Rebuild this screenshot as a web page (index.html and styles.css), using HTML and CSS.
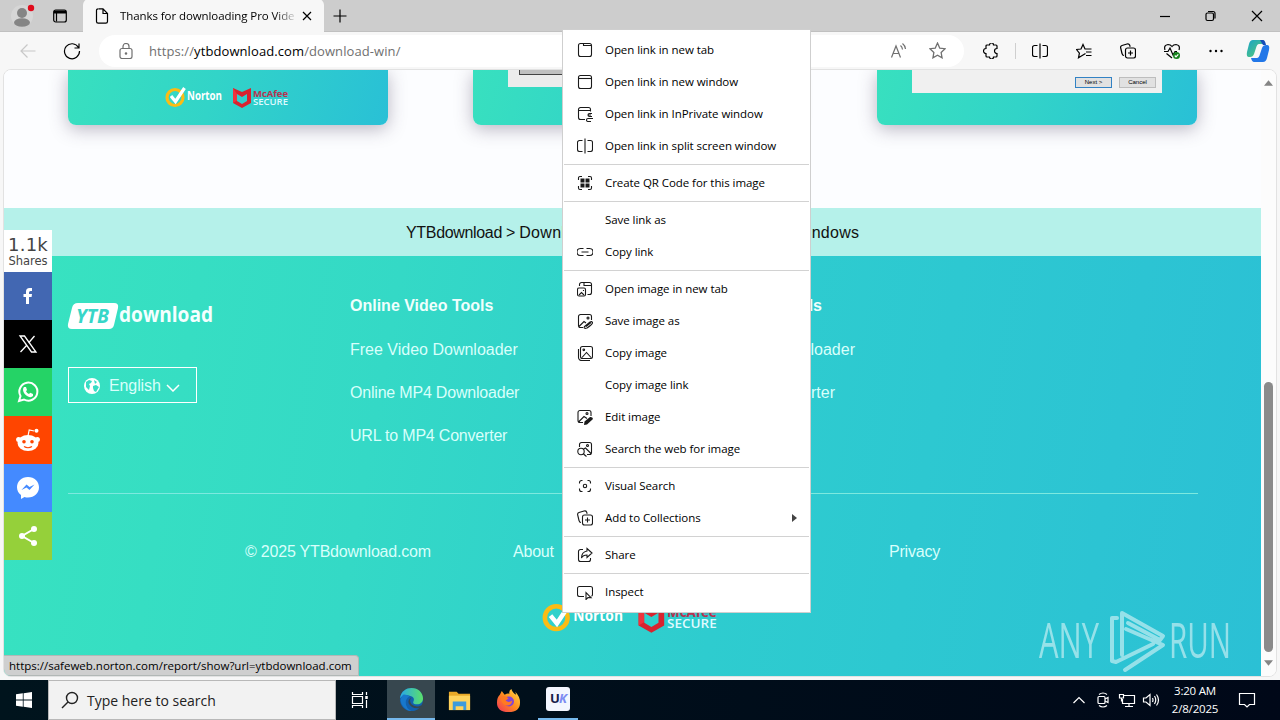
FILE: index.html
```html
<!DOCTYPE html>
<html lang="en">
  <head>
    <meta charset="UTF-8">
    <meta name="viewport" content="width=device-width, initial-scale=1.0">
    <title>Thanks for downloading</title>
    <link rel="stylesheet" href="styles.css">
  </head>

  <body>
    <svg class="defs" width="0" height="0">
      <defs>
        <linearGradient id="copilot-a" x1="0" y1="0" x2="1" y2="1"><stop offset="0" stop-color="#19a3c8"/><stop offset="1" stop-color="#5fcf6c"/></linearGradient>
        <linearGradient id="edge-a" x1="0" y1="0" x2="1" y2="0"><stop offset="0" stop-color="#28a8e8"/><stop offset="1" stop-color="#5be06a"/></linearGradient>
        <linearGradient id="fox-a" x1="1" y1="0" x2="0" y2="1"><stop offset="0" stop-color="#ffe14a"/><stop offset="0.5" stop-color="#ff8a1e"/><stop offset="1" stop-color="#f0305c"/></linearGradient>
        <symbol id="window" viewBox="0 0 16 16"><rect x="1.500" y="1.500" width="13" height="13" rx="2"/><path d="M1.500 4.500h13"/></symbol>
        <symbol id="tab" viewBox="0 0 16 16"><rect x="1.500" y="1.500" width="13" height="13" rx="2"/><path d="M6.500 1.500v2h8"/></symbol>
        <symbol id="private" viewBox="0 0 16 16"><path d="M8 13.500H3.500a2 2 0 0 1-2-2v-8a2 2 0 0 1 2-2h8a2 2 0 0 1 2 2v2M1.500 4.500h12M15 7.500h-2.500a1.500 1.500 0 0 0 0 3H15M16 12.500h-5a1.500 1.500 0 0 0 0 3h3M11 9h3"/></symbol>
        <symbol id="split" viewBox="0 0 16 16"><path d="M8 .5v15M5.500 2.500h-3a2 2 0 0 0-2 2v7a2 2 0 0 0 2 2h3M10.500 2.500h3a2 2 0 0 1 2 2v7a2 2 0 0 1-2 2h-3"/></symbol>
        <symbol id="qr" viewBox="0 0 16 16"><path d="M1.500 5V3a1.500 1.500 0 0 1 1.500-1.500h2M11 1.500h2A1.500 1.500 0 0 1 14.500 3v2M14.500 11v2a1.500 1.500 0 0 1-1.500 1.500h-2M5 14.500H3A1.500 1.500 0 0 1 1.500 13v-2"/><path class="solid" d="M3.500 3.500h4v4h-4zM8.500 3.500h4v4h-4zM3.500 8.500h4v4h-4zM8.500 8.500h4v4h-4z"/></symbol>
        <symbol id="link" viewBox="0 0 16 16"><path d="M6.500 4.500h-3a3.500 3.500 0 0 0 0 7h3M9.500 4.500h3a3.500 3.500 0 0 1 0 7h-3M4.500 8h7"/></symbol>
        <symbol id="image-tab" viewBox="0 0 16 16"><path d="M2.500 5V3.500a2 2 0 0 1 2-2h8a2 2 0 0 1 2 2v8a2 2 0 0 1-2 2h-2M7 1.500v3h7.500"/><rect x=".5" y="7" width="8" height="8" rx="1.500"/><path d="M2 14l2.500-2.500L7 14M6.500 9v1"/></symbol>
        <symbol id="image-save" viewBox="0 0 16 16"><path d="M6 14.500H3.500a2 2 0 0 1-2-2v-9a2 2 0 0 1 2-2h9a2 2 0 0 1 2 2V7M2 13.500l5-5 2 1.500M7 14l6-5q2-1 2.500.5T10 15q-3 1-3-1M9 13.500l5-4"/><circle cx="11" cy="5" r="1"/></symbol>
        <symbol id="images" viewBox="0 0 16 16"><rect x="3.500" y="1.500" width="12" height="12" rx="2"/><path d="M1.500 4v8.500a3 3 0 0 0 3 3H13M5 12.500l4.500-5 4.500 5"/><circle cx="6.800" cy="4.800" r=".8"/></symbol>
        <symbol id="image-edit" viewBox="0 0 16 16"><path d="M6 13.500H3a2 2 0 0 1-2-2v-8a2 2 0 0 1 2-2h9a2 2 0 0 1 2 2V7M2 12.500l5-5 3 2"/><circle cx="10" cy="4.500" r="1"/><path class="solid" d="M7.500 12.500l5.500-4.500q2.500-.5 3 2l-6 5.500-3 .5z"/></symbol>
        <symbol id="image-search" viewBox="0 0 16 16"><path d="M2.500 6V3.500a2 2 0 0 1 2-2h8a2 2 0 0 1 2 2v8a2 2 0 0 1-2 2H10M6.500 8l2-1 6 6M6.500 13l3 2.500"/><circle cx="4" cy="10.500" r="3.200"/><circle cx="10.500" cy="4.500" r="1"/></symbol>
        <symbol id="visual" viewBox="0 0 16 16"><path d="M2.500 5.500v-1a2 2 0 0 1 2-2h1M10.500 2.500h1a2 2 0 0 1 2 2v1M13.500 10.500v1a2 2 0 0 1-2 2h-1M5.500 13.500h-1a2 2 0 0 1-2-2v-1"/><circle cx="8" cy="8" r="1.700"/></symbol>
        <symbol id="collections" viewBox="0 0 16 16"><path d="M4 12.500q-1.500 0-2-2L.7 5q-.5-2 1.300-2.500l5-1.500q2-.5 2.600 1l.6 1.700"/><rect x="5.500" y="5" width="10" height="10" rx="2"/><path d="M10.500 7.500v5M8 10h5"/></symbol>
        <symbol id="share" viewBox="0 0 16 16"><path d="M6 2.500H3.500a2 2 0 0 0-2 2v8a2 2 0 0 0 2 2h8a2 2 0 0 0 2-2V11M10 1.500l5 4.500-5 4.500V8q-4 0-5.500 3Q4.500 5 10 4z"/></symbol>
        <symbol id="inspect" viewBox="0 0 16 16"><path d="M7 12.500H2.500a2 2 0 0 1-2-2v-6a2 2 0 0 1 2-2h11a2 2 0 0 1 2 2v6a2 2 0 0 1-1 1.700M9 8.500v7l2-2 3 .2z"/></symbol>
        <symbol id="star" viewBox="0 0 16 16"><path d="M8 1l2.100 4.700 5 .6-3.700 3.500.9 5.100L8 12.400l-4.300 2.500.9-5.100L.9 6.300l5-.6z"/></symbol>
        <symbol id="badges" viewBox="0 0 126 28">
          <circle cx="10" cy="14.500" r="8" fill="none" stroke="#fbbc14" stroke-width="3.200"/>
          <path d="M6 13l4.500 5.500L19.500 5" fill="none" stroke="#fff" stroke-width="3.200"/>
          <text class="norton" x="22" y="17" textLength="35" lengthAdjust="spacingAndGlyphs">Norton</text>
          <path d="M68 5l9 4 9-4v15l-9 5-9-5z" fill="#d8232f"/>
          <path d="M68 5v15l4-2.500V11z" fill="#f0333d"/>
          <path d="M72 11l5 3 5-3v7l-5 3-5-3z" fill="#30cfce"/>
          <text class="mcafee" x="88" y="14" textLength="35" lengthAdjust="spacingAndGlyphs">McAfee</text>
          <text class="secure" x="88" y="22" textLength="35" lengthAdjust="spacingAndGlyphs">SECURE</text>
        </symbol>
      </defs>
    </svg>

    <div class="titlebar">
      <svg class="profile" viewBox="0 0 44 32"><circle cx="22" cy="16" r="11" fill="#d6d6d6"/><circle cx="22" cy="13" r="5" fill="#858585"/><ellipse cx="22" cy="22.500" rx="8" ry="4.300" fill="#858585"/><circle cx="31" cy="8" r="3.200" fill="#e00b1c"/></svg>
      <svg class="tab-actions line" viewBox="0 0 16 16"><rect x="1.700" y="2" width="12.600" height="12" rx="2"/><path d="M2 4h12" stroke-width="3"/><path d="M4.500 4v9.500"/></svg>
      <div class="tab">
        <svg class="icon line" viewBox="0 0 16 16"><path d="M4.500.8H9l4.500 4.700v8a1.700 1.700 0 0 1-1.700 1.700H4.200a1.700 1.700 0 0 1-1.700-1.700v-11A1.700 1.700 0 0 1 4.200.8M9 1v4.500h4.500"/></svg>
        <span class="tab-title">Thanks for downloading Pro Vide</span>
        <svg class="tab-close line" viewBox="0 0 10 10"><path d="M1 1l8 8M9 1L1 9"/></svg>
      </div>
      <svg class="new-tab line" viewBox="0 0 16 16"><path d="M8 1.500v13M1.500 8h13"/></svg>
      <div class="window-buttons">
        <svg class="line" viewBox="0 0 46 32"><path d="M18 16.500h10"/></svg>
        <svg class="line" viewBox="0 0 46 32"><rect x="18" y="13" width="7.500" height="7.500" rx="1.500"/><path d="M20 11.500h5a2 2 0 0 1 2 2v5"/></svg>
        <svg class="line" viewBox="0 0 46 32"><path d="M18 11l10 10M28 11L18 21"/></svg>
      </div>
    </div>

    <div class="toolbar">
      <svg class="back line" viewBox="0 0 16 16"><path d="M15.500 8H1M7.500 1.500L1 8l6.500 6.500"/></svg>
      <svg class="refresh line" viewBox="0 0 18 18"><path d="M15.500 5.500A7.500 7.500 0 1 0 16.500 9M16 1.500v4.500h-4.500"/></svg>
      <div class="address">
        <svg class="lock line" viewBox="0 0 16 16"><rect x="2" y="5.500" width="12" height="10" rx="2"/><path d="M5 5.500V3.500a3 3 0 0 1 6 0v2"/><circle cx="8" cy="10.500" r=".7"/></svg>
        <span class="url">https://<b>ytbdownload.com</b>/download-win/</span>
        <svg class="read line" viewBox="0 0 16 16"><path d="M1 14.500L5.500 3 10 14.500M2.500 10.500h6M10 2.500a6 6 0 0 1 2 4M12 .5a8 8 0 0 1 3 5.500"/></svg>
        <svg class="favorite line"><use href="#star"/></svg>
      </div>
      <div class="tools">
        <svg class="line" viewBox="0 0 16 16"><path d="M4 2h2.500a2 2 0 0 1 4 0H13a1 1 0 0 1 1 1v2.500a2.500 2.500 0 0 0 0 5V13a1 1 0 0 1-1 1h-2.500a2 2 0 0 1-4 0H4a1 1 0 0 1-1-1v-2.500a2.300 2.300 0 0 1 0-5V3a1 1 0 0 1 1-1z"/></svg>
        <i class="divider"></i>
        <svg class="line"><use href="#split"/></svg>
        <svg class="line" viewBox="0 0 16 16"><path d="M9.500 10.500l-3.700 2.300-3.300 2 .9-4.600L.5 6.500 5 6l2-4.500L9 6h6.500M10 9h5.500M10 12.500h5.500"/></svg>
        <svg class="line"><use href="#collections"/></svg>
        <svg class="line" viewBox="0 0 16 16"><path d="M1 7Q-.5 2 4 1.500q2.500 0 4 2 1.500-2 4-2Q16.500 2 15 7M0 8.500h4L6 5l3 7 2-3.500h2M2.500 10.500L8 15"/><circle cx="12.500" cy="12.500" r="3.500" fill="#15821c" stroke="none"/><path d="M10.800 12.500l1.200 1.300 2.300-2.500" stroke="#fff"/></svg>
        <svg viewBox="0 0 16 16"><circle cx="2.500" cy="8" r="1.200"/><circle cx="8" cy="8" r="1.200"/><circle cx="13.500" cy="8" r="1.200"/></svg>
        <svg class="copilot" viewBox="0 0 24 24"><path d="M7 1h9q2 0 3 4H13q-2 0-3 4l-2 6q-1 3-4 3H3q-3 0-2-5L3 5q1-4 4-4z" fill="url(#copilot-a)"/><path d="M17 23H8q-2 0-3-4h6q2 0 3-4l2-6q1-3 4-3h1q3 0 2 5l-2 8q-1 4-4 4z" fill="#2277e8"/><path d="M14 1h3q2 0 3 5h-3z" fill="#154db8"/></svg>
      </div>
    </div>

    <div class="viewport">
      <div class="page">
        <div class="cards">
          <div class="card"><svg class="badges-small"><use href="#badges"/></svg></div>
          <div class="card"><div class="installer"><div class="installer-bar"></div></div></div>
          <div class="card"><div class="dialog"><span class="dialog-btn primary">Next &gt;</span><span class="dialog-btn">Cancel</span></div></div>
        </div>
        <div class="breadcrumb"><span class="home">YTBdownload &gt; </span>Download Pro Video Downloader for Windows</div>
        <div class="footer">
          <div class="footer-top">
            <div class="brand">
              <svg class="logo" viewBox="0 0 146 28"><path d="M10 1h36q5 0 4 5l-4 17q-1 4-5 4H4q-5 0-4-5L4 6q1-5 6-5z" fill="#fff"/><text class="logo-ytb" x="8" y="21" textLength="33" lengthAdjust="spacingAndGlyphs">YTB</text><text class="logo-name" x="51" y="20" textLength="94" lengthAdjust="spacingAndGlyphs">download</text></svg>
              <div class="language">
                <svg class="globe" viewBox="0 0 16 16"><circle cx="8" cy="8" r="8" fill="#fff"/><path d="M2 4l3-2 3 1-1 2-2 1 1 2-1 4-3-3zM10 2l3 2-2 2zM9 8l3-1 3 2-3 5-2-1-1-3z" fill="#37dcc4"/></svg>
                <span>English</span>
                <svg class="chevron line" viewBox="0 0 14 8"><path d="M1 1l6 6 6-6"/></svg>
              </div>
            </div>
            <div class="links">
              <h4>Online Video Tools</h4>
              <a>Free Video Downloader</a>
              <a class="tight">Online MP4 Downloader</a>
              <a class="tight">URL to MP4 Converter</a>
            </div>
            <div class="links links-desktop">
              <h4>Desktop Tools</h4>
              <a class="wide">Video Downloader</a>
              <a class="mid">Video Converter</a>
            </div>
          </div>
          <div class="legal">
            <span class="copyright tight">© 2025 YTBdownload.com</span>
            <span class="about tight">About</span>
            <span class="tight">Privacy</span>
          </div>
          <svg class="badges-large"><use href="#badges"/></svg>
        </div>
      </div>
      <div class="scrollbar">
        <svg viewBox="0 0 10 6"><path d="M5 0l5 6H0z"/></svg>
        <div class="thumb"></div>
        <svg viewBox="0 0 10 6"><path d="M0 0h10L5 6z"/></svg>
      </div>

      <div class="shares">
        <div class="share-count"><b>1.1k</b><span>Shares</span></div>
        <div class="share facebook"><svg viewBox="0 0 24 24"><path d="M10 20v-7H7.500v-3H10V7.500Q10 4 13.500 4H16v3h-1.500Q13 7 13 8.500V10h3l-.4 3H13v7z"/></svg></div>
        <div class="share x"><svg viewBox="0 0 24 24"><path d="M4 4h4.500l11.500 16h-4.500zM18.500 4l-6 7M11 13l-6.500 7" fill="none" stroke="#fff" stroke-width="1.300"/></svg></div>
        <div class="share whatsapp"><svg viewBox="0 0 24 24"><path d="M3 21l1.500-5a9 9 0 1 1 3.500 3.500z" fill="none" stroke="#fff" stroke-width="2"/><path d="M8 7h2l1 3-1 1.200q1 2 3 2.800l1.200-1.300L17 14v2q-2 2-5 .5Q7.500 14 7 10 7 8 8 7z"/></svg></div>
        <div class="share reddit"><svg viewBox="0 0 24 24"><path d="M12 8l1.200-6 5 1" fill="none" stroke="#fff" stroke-width="1.200"/><circle cx="20.500" cy="2.800" r="2"/><circle cx="2.600" cy="11.500" r="2.500"/><circle cx="21.400" cy="11.500" r="2.500"/><ellipse cx="12" cy="15" rx="10.500" ry="8"/><circle cx="8" cy="13.800" r="1.800" fill="#ff4500"/><circle cx="16" cy="13.800" r="1.800" fill="#ff4500"/><path d="M8 18.500q4 2.500 8 0" fill="none" stroke="#ff4500" stroke-width="1.200"/></svg></div>
        <div class="share messenger"><svg viewBox="0 0 24 24"><path d="M12 1C5.500 1 1 5.500 1 11.300c0 3.200 1.500 6 4 7.700v4l3.500-2q1.500.5 3.500.5c6.500 0 11-4.300 11-10.200S18.500 1 12 1z"/><path d="M5.500 14l5-5.500 3 2.500 5-2.500-5 5.500-3-2.500z" fill="#448aff"/></svg></div>
        <div class="share any"><svg viewBox="0 0 24 24"><path d="M18 5L6 12l12 7" fill="none" stroke="#fff" stroke-width="2"/><circle cx="6" cy="12" r="3"/><circle cx="18" cy="5" r="3"/><circle cx="18" cy="19" r="3"/></svg></div>
      </div>

      <svg class="watermark" viewBox="0 0 196 64">
        <g fill="#fff">
          <text x="1" y="49" textLength="60" lengthAdjust="spacingAndGlyphs">ANY</text>
          <text x="131" y="49" textLength="62" lengthAdjust="spacingAndGlyphs">RUN</text>
        </g>
        <path d="M79 9h-5v43l4 1 37-18M84 46V4l41 23-3 4-32-17M88 20l37 16-38 25 M88 20" fill="none" stroke="#fff" stroke-width="4" stroke-linejoin="round" stroke-linecap="round"/>
      </svg>
      <div class="status">https://safeweb.norton.com/report/show?url=ytbdownload.com</div>
    </div>

    <div class="taskbar">
      <div class="start"><svg viewBox="0 0 16 16"><path d="M0 2.300l6.800-1v6.200H0zM7.600 1.200L16 0v7.500H7.600zM0 8.400h6.800v6.300l-6.800-1zM7.600 8.400H16V16l-8.400-1.200z"/></svg></div>
      <div class="search"><svg class="line" viewBox="0 0 18 18"><circle cx="11" cy="7" r="5.500"/><path d="M7 11l-6 6"/></svg><span>Type here to search</span></div>
      <div class="task view"><svg class="line" viewBox="0 0 18 18"><path d="M1.500 1v2.500h10V1M1.500 17v-2.500h10V17M1.500 5.500h10v7h-10zM15.500 1v3M15.500 9v8"/><path d="M15.500 5v3" stroke-width="2.500"/></svg></div>
      <div class="task active"><svg viewBox="0 0 26 26"><circle cx="13" cy="13" r="12" fill="#1260ae"/><path d="M1 12C2 4 8 1 13 1c7 0 12 5 12 11 0 4-3 6-6 6s-5-1-4-3 1-5-4-6-8 0-10 3z" fill="url(#edge-a)"/><path d="M13 11q-3 3 0 7 3 3 8 2 2-1 3-1-1 2-3 3-8 1-11-5-1-4 3-6z" fill="#37474f"/><path d="M4 8q-5 7 1 13 4 4 8 4-6-3-6-9 0-4 4-6-4-3-7-2z" fill="#1878cc"/></svg></div>
      <div class="task"><svg viewBox="0 0 26 26"><path d="M2 4h8l2 2h12v17H2z" fill="#e9a928"/><path d="M2 8h22v15H2z" fill="#ffd35c"/><path d="M6 14h14v9h-3v-4H9v4H6z" fill="#3d9bdc"/></svg></div>
      <div class="task"><svg viewBox="0 0 26 26"><path d="M4 7l2-4 3 4q3-2 5-1-1-3 2-5 1 4 5 6l-1-3q5 5 5 11 0 10-12 10T1 15q0-5 3-8z" fill="url(#fox-a)"/><circle cx="13.500" cy="14" r="5.200" fill="#8144d8"/><path d="M5 9q5-2 8 2l-3 2q3 3 7 0-1 6-7 5-5-2-5-9z" fill="#ff7a22"/></svg></div>
      <div class="task uk"><span class="uk-tile">U<em>K</em></span></div>
      <div class="tray">
        <svg class="line" viewBox="0 0 18 18"><path d="M3.500 12L9 6.500l5.500 5.500"/></svg>
        <svg class="line" viewBox="0 0 18 18"><rect x="4" y="5.500" width="7" height="7" rx="1"/><path d="M11 8l3-1.500v5L11 10M5 3.500q4-3 8 0M5 14.500q4 3 8 0"/></svg>
        <svg class="line" viewBox="0 0 18 18"><path d="M5.500 4.500h11v8H4.500V8M11 12.500v3M7 15.500h8M1.500 3.500h4v3.500h-4zM3.500 7v3.500"/></svg>
        <svg class="line" viewBox="0 0 18 18"><path d="M1.500 7H4l4-3.500v11L4 11H1.500zM10.500 7q1 2 0 4M12.500 5q2.500 4 0 8M14.500 3.500q4 5.500 0 11"/></svg>
      </div>
      <div class="clock"><span>3:20 AM</span><span>2/8/2025</span></div>
      <svg class="notify line" viewBox="0 0 18 18"><path d="M1.500 2.500h15v11h-5L9 16l-2.500-2.500h-5z"/></svg>
    </div>

    <div class="menu">
      <div class="item"><svg><use href="#tab"/></svg>Open link in new tab</div>
      <div class="item"><svg><use href="#window"/></svg>Open link in new window</div>
      <div class="item"><svg><use href="#private"/></svg>Open link in InPrivate window</div>
      <div class="item"><svg><use href="#split"/></svg>Open link in split screen window</div>
      <hr>
      <div class="item"><svg><use href="#qr"/></svg>Create QR Code for this image</div>
      <hr>
      <div class="item"><svg></svg>Save link as</div>
      <div class="item"><svg><use href="#link"/></svg>Copy link</div>
      <hr>
      <div class="item"><svg><use href="#image-tab"/></svg>Open image in new tab</div>
      <div class="item"><svg><use href="#image-save"/></svg>Save image as</div>
      <div class="item"><svg><use href="#images"/></svg>Copy image</div>
      <div class="item"><svg></svg>Copy image link</div>
      <div class="item"><svg><use href="#image-edit"/></svg>Edit image</div>
      <div class="item"><svg><use href="#image-search"/></svg>Search the web for image</div>
      <hr>
      <div class="item"><svg><use href="#visual"/></svg>Visual Search</div>
      <div class="item"><svg><use href="#collections"/></svg>Add to Collections<i class="submenu"></i></div>
      <hr>
      <div class="item"><svg><use href="#share"/></svg>Share</div>
      <hr>
      <div class="item"><svg><use href="#inspect"/></svg>Inspect</div>
    </div>
  </body>
</html>
```

FILE: styles.css
```css
* {
  box-sizing: border-box;
}

body {
  margin: 0;
  width: 1280px;
  height: 720px;
  overflow: hidden;
  position: relative;
  display: flex;
  flex-direction: column;
  background: #f7f7f7;
  font-family: "Open Sans", "Noto Sans", sans-serif;
  font-size: 12px;
  color: #000;
}

svg {
  display: block;
  flex: none;
}

.defs {
  position: absolute;
}

.line {
  fill: none;
  stroke: currentColor;
  stroke-width: 1.2;
}

/* browser frame */
.titlebar {
  height: 32px;
  flex: none;
  display: flex;
  align-items: center;
  background: #cdcdcd;
  border-bottom: 1px solid #c0c0c0;
}

.profile {
  width: 44px;
  height: 32px;
}

.tab-actions {
  width: 16px;
  height: 16px;
  margin: 0 15px 0 8px;
}

.tab {
  width: 241px;
  height: 33px;
  display: flex;
  align-items: center;
  padding: 0 11px;
  background: #f7f7f7;
  border-radius: 6px 6px 0 0;
}

.icon {
  width: 16px;
  height: 16px;
  margin-right: 10px;
}

.tab-title {
  width: 176px;
  flex: none;
  overflow: hidden;
  white-space: nowrap;
  font-size: 11.5px;
  letter-spacing: -0.08px;
  -webkit-mask-image: linear-gradient(to right, #000 155px, transparent 178px);
  mask-image: linear-gradient(to right, #000 155px, transparent 178px);
}

.tab-close {
  width: 10px;
  height: 10px;
  margin-left: 6px;
}

.new-tab {
  width: 16px;
  height: 16px;
  margin-left: 8px;
}

.window-buttons {
  display: flex;
  margin-left: auto;
}

.window-buttons svg {
  width: 46px;
  height: 32px;
}

.toolbar {
  height: 37px;
  flex: none;
  display: flex;
  align-items: center;
}

.back {
  width: 16px;
  height: 16px;
  margin-left: 20px;
  color: #c8c8c8;
}

.refresh {
  width: 18px;
  height: 18px;
  margin: 0 18px 0 27px;
}

.address {
  width: 865px;
  height: 32px;
  display: flex;
  align-items: center;
  padding: 0 18px 0 19px;
  border-radius: 16px;
  background: #fff;
  color: #707070;
}

.lock {
  width: 16px;
  height: 16px;
  margin-right: 15px;
}

.url {
  font-size: 13px;
  letter-spacing: 0.09px;
}

.url b {
  font-weight: normal;
  color: #000;
}

.read {
  width: 17px;
  height: 16px;
  margin-left: auto;
  margin-right: 22px;
}

.favorite {
  width: 17px;
  height: 17px;
}

.tools {
  display: flex;
  align-items: center;
  margin-left: 5px;
}

.tools svg {
  width: 16px;
  height: 16px;
  margin: 0 14px;
}

.tools .copilot {
  width: 24px;
  height: 24px;
  margin: 0 0 0 8px;
}

.divider {
  width: 1px;
  height: 16px;
  margin: 0 2px;
  background: #cfcfcf;
}

/* web page */
.viewport {
  position: relative;
  height: 608px;
  flex: none;
  margin: 0 3px;
  display: flex;
  border: 1px solid #e2e2e2;
  border-radius: 8px;
  overflow: hidden;
  background: #fff;
}

.page {
  width: 1257px;
  height: 606px;
  overflow: hidden;
  font-family: "Liberation Sans", Arial, sans-serif;
  font-size: 16px;
}

.cards {
  height: 138px;
  display: flex;
  gap: 84.5px;
  padding-left: 64px;
  background: #fcfdff;
}

.card {
  width: 320px;
  height: 55px;
  border-radius: 0 0 8px 8px;
  background: linear-gradient(105deg, #38e0bf, #32d4c8 45%, #29c0d6);
  box-shadow: 0 4px 18px rgba(60, 50, 80, 0.35);
}

.badges-small {
  width: 126px;
  height: 28px;
  margin: 13px 0 0 97px;
}

.norton, .mcafee, .secure {
  font-family: "Open Sans", sans-serif;
  font-weight: bold;
}

.norton {
  font-size: 11.5px;
  fill: #fff;
}

.mcafee {
  font-size: 9.5px;
  fill: #b9324f;
}

.secure {
  font-size: 9px;
  font-weight: 600;
  fill: #dffaff;
}

.installer {
  width: 250px;
  height: 17px;
  margin-left: 35px;
  padding-left: 11px;
  background: #ececec;
}

.installer-bar {
  width: 228px;
  height: 5px;
  background: #c0c0c0;
  border: 1px solid #444;
  border-top: none;
}

.dialog {
  width: 250px;
  height: 23px;
  margin-left: 35px;
  padding: 7px 6px 0 0;
  display: flex;
  justify-content: flex-end;
  gap: 7px;
  background: #f0f0f0;
}

.dialog-btn {
  width: 37px;
  height: 11px;
  border: 1px solid #bdbdbd;
  background: #e1e1e1;
  font-size: 6px;
  line-height: 9px;
  text-align: center;
}

.dialog-btn.primary {
  border-color: #3282c4;
}

.breadcrumb {
  height: 48px;
  line-height: 49px;
  padding-left: 402px;
  background: #b5f1ea;
  color: #111;
  white-space: nowrap;
  letter-spacing: 0.3px;
}

.home {
  letter-spacing: -0.33px;
}

.footer {
  height: 420px;
  padding: 0 64px;
  color: #d8fffb;
  background: linear-gradient(100deg, #38e3c0, #34d9c6 30%, #2ecccf 58%, #2bc0d5);
}

.footer-top {
  width: 1130px;
  height: 238px;
  display: flex;
  border-bottom: 1px solid #7de9df;
}

.brand {
  width: 282px;
  padding-top: 46px;
}

.logo {
  width: 146px;
  height: 28px;
  overflow: visible;
}

.logo-ytb {
  font: italic bold 20px "Open Sans", sans-serif;
  fill: #37d6c8;
}

.logo-name {
  font: bold 22px "Open Sans", sans-serif;
  fill: #f4ffff;
}

.language {
  width: 129px;
  height: 36px;
  margin-top: 37px;
  padding: 1px 0 0 15px;
  display: flex;
  align-items: center;
  border: 1px solid #fff;
  letter-spacing: -0.1px;
}

.globe {
  width: 16px;
  height: 16px;
  margin-right: 9px;
}

.chevron {
  width: 14px;
  height: 8px;
  margin: 4px 0 0 5px;
  stroke: #fff;
  stroke-width: 1.5;
}

.links {
  width: 282px;
  padding-top: 40px;
  display: flex;
  flex-direction: column;
}

.links h4 {
  margin: 0 0 25px;
  font-size: 16px;
  line-height: 19px;
  color: #f0fffd;
}

.links a {
  line-height: 19px;
  margin-bottom: 24px;
}

.tight {
  letter-spacing: -0.2px;
}

.links-desktop {
  text-align: right;
}

.links-desktop h4 {
  width: 190px;
}

.wide {
  width: 223px;
}

.mid {
  width: 203px;
}

.legal {
  display: flex;
  padding: 48px 0 0 177px;
  line-height: 20px;
}

.copyright {
  width: 268px;
}

.about {
  width: 376px;
}

.badges-large {
  width: 179px;
  height: 40px;
  margin: 35px 0 0 474px;
}

.scrollbar {
  width: 15px;
  display: flex;
  flex-direction: column;
  align-items: center;
  padding: 10px 0;
  background: #fcfcfc;
  fill: #858585;
}

.scrollbar svg {
  width: 9px;
  height: 6px;
}

.thumb {
  width: 9px;
  height: 271px;
  margin: 296px 0 8px;
  border-radius: 5px;
  background: #8b8b8b;
}

.shares {
  position: absolute;
  left: 0;
  top: 160px;
  width: 48px;
}

.share-count {
  height: 42px;
  padding-top: 4px;
  display: flex;
  flex-direction: column;
  align-items: center;
  background: #fff;
  color: #444;
  font-family: "DejaVu Sans", Verdana, sans-serif;
}

.share-count b {
  font-size: 18px;
  font-weight: normal;
  line-height: 22px;
  letter-spacing: 0.2px;
}

.share-count span {
  line-height: 11px;
  font-size: 11.5px;
}

.share {
  height: 48px;
  display: flex;
  align-items: center;
  justify-content: center;
  fill: #fff;
}

.share svg {
  width: 24px;
  height: 24px;
}

.facebook {
  background: #4267b2;
}

.x {
  background: #000;
}

.whatsapp {
  background: #25d366;
}

.reddit {
  background: #ff4500;
}

.messenger {
  background: #448aff;
}

.any {
  background: #95d03a;
}

.watermark {
  position: absolute;
  left: 1034px;
  top: 539px;
  width: 196px;
  height: 64px;
  opacity: 0.5;
  overflow: visible;
}

.watermark text {
  font: 400 50px "Open Sans", sans-serif;
}

.status {
  position: absolute;
  left: 0;
  bottom: 0;
  width: 355px;
  height: 21px;
  padding-left: 5px;
  border: 1px solid #b2b8b6;
  border-left: none;
  border-radius: 0 4px 0 0;
  background: #cfcfcf;
  line-height: 19px;
  font-size: 11.5px;
  white-space: nowrap;
}

/* windows taskbar */
.taskbar {
  height: 40px;
  margin-top: 3px;
  flex: none;
  display: flex;
  align-items: center;
  background: linear-gradient(to right, #00141d, #000818);
  color: #fff;
  fill: #fff;
}

.start {
  width: 48px;
  padding-left: 16px;
}

.start svg {
  width: 16px;
  height: 16px;
}

.search {
  width: 288px;
  height: 40px;
  padding-left: 12px;
  display: flex;
  align-items: center;
  border: 1px solid #b8b8b8;
  background: #f2f2f2;
  color: #222;
  font-size: 14px;
}

.search svg {
  width: 18px;
  height: 18px;
  margin-right: 8px;
  stroke-width: 1.4;
}

.task {
  width: 49px;
  height: 40px;
  display: flex;
  align-items: center;
  justify-content: center;
}

.task svg {
  width: 25px;
  height: 25px;
}

.view {
  width: 51px;
  padding-right: 3px;
}

.view svg {
  width: 18px;
  height: 18px;
}

.active {
  width: 48px;
  background: #37474f;
  border-bottom: 2px solid #76b9ed;
}

.uk {
  width: 40px;
  margin-left: 5px;
  border-bottom: 2px solid #76b9ed;
}

.uk-tile {
  width: 24px;
  height: 24px;
  border-radius: 3px;
  background: #f3f6ff;
  color: #17204a;
  font-size: 13px;
  font-weight: bold;
  line-height: 23px;
  text-align: center;
  letter-spacing: -1px;
}

.uk-tile em {
  color: #7d8cf2;
}

.tray {
  display: flex;
  gap: 6px;
  margin-left: auto;
}

.tray svg, .notify {
  width: 18px;
  height: 18px;
}

.clock {
  width: 70px;
  display: flex;
  flex-direction: column;
  align-items: center;
  line-height: 18px;
  font-size: 11.5px;
  letter-spacing: -0.2px;
}

.notify {
  margin: 0 24px 0 8px;
}

/* context menu */
.menu {
  position: absolute;
  left: 562px;
  top: 29px;
  width: 249px;
  height: 584px;
  padding: 4px 1px;
  border: 1px solid #cfcfcf;
  background: #fff;
}

.item {
  height: 32px;
  padding: 0 0 2px 13px;
  display: flex;
  align-items: center;
  font-size: 11.5px;
  letter-spacing: -0.06px;
}

.item svg {
  width: 16px;
  height: 16px;
  margin: 2px 12px 0 0;
  fill: none;
  stroke: #1a1a1a;
  stroke-width: 1.1;
}

.solid {
  fill: #1a1a1a;
  stroke: none;
}

.submenu {
  margin: 2px 12px 0 auto;
  border: 4px solid transparent;
  border-left: 5px solid #444;
  border-right: none;
}

.menu hr {
  height: 1px;
  margin: 2px 0;
  border: none;
  background: #d2d2d2;
}
```
